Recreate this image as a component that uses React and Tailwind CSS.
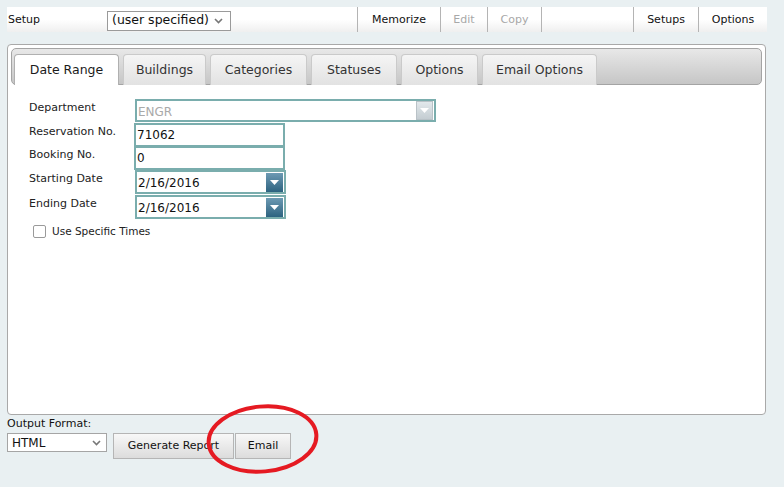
import React from "react";

const FONT = { fontFamily: '"DejaVu Sans", Verdana, sans-serif' };

function Chevron({ className = "" }) {
  return (
    <svg width="9" height="6" viewBox="0 0 9 6" className={className}>
      <polyline points="1,1 4.5,4.5 8,1" fill="none" stroke="#777" strokeWidth="1.6" />
    </svg>
  );
}

function Tri({ color = "#fff" }) {
  return (
    <svg width="9" height="5" viewBox="0 0 9 5">
      <polygon points="0,0 9,0 4.5,5" fill={color} />
    </svg>
  );
}

// toolbar button cell
function ToolBtn({ label, w, disabled }) {
  return (
    <div
      className={`h-full flex items-center justify-center pt-[2px] border-l border-[#b4b4b4] ${w} ${
        disabled ? "text-[#a8a8a8]" : "text-[#111]"
      }`}
    >
      {label}
    </div>
  );
}

const TABS = [
  { label: "Date Range", w: "w-[105px]", active: true },
  { label: "Buildings", w: "w-[83px]" },
  { label: "Categories", w: "w-[97px]" },
  { label: "Statuses", w: "w-[86px]" },
  { label: "Options", w: "w-[77px]" },
  { label: "Email Options", w: "w-[115px]" },
];

function TextBox({ value, className = "" }) {
  return (
    <div
      className={`h-[24px] w-[151px] border-2 border-[#7aadad] bg-white flex items-center pl-[1px] text-[12px] text-[#111] ${className}`}
    >
      {value}
    </div>
  );
}

function DateBox({ value }) {
  return (
    <div className="h-[24px] w-[151px] ml-[1px] border-2 border-[#7aadad] bg-white flex items-center justify-between pl-[1px] pr-[1px] text-[12px] text-[#111]">
      <span className="pt-[2px]">{value}</span>
      <div className="w-[17px] h-[19px] bg-gradient-to-b from-[#6d9ab3] to-[#2d6380] flex items-center justify-center">
        <Tri />
      </div>
    </div>
  );
}

function Label({ children }) {
  return <div className="w-[105px] pt-[1px] leading-[16px] text-[11px] text-[#222]">{children}</div>;
}

export default function App() {
  return (
    <div className="relative w-full min-h-[487px] bg-[#e9f0f2] pt-[7px] px-[7px]" style={FONT}>
      {/* toolbar */}
      <div className="w-[760px] h-[25px] flex items-center bg-gradient-to-b from-white via-white to-[#efefef] text-[11px]">
        <div className="w-[100px] pl-[1px] pt-[1px] text-[#111]">Setup</div>
        <div className="w-[124px] h-[20px] mt-[2px] border border-[#9a9a9a] bg-white flex items-center pl-[4px] pr-[7px] justify-between text-[12.5px] text-[#111]">
          <span>(user specified)</span>
          <Chevron />
        </div>
        <div className="w-[126px]" />
        <ToolBtn label="Memorize" w="w-[83px]" />
        <ToolBtn label="Edit" w="w-[47px]" disabled />
        <ToolBtn label="Copy" w="w-[54px]" disabled />
        <div className="h-full flex-1 border-l border-[#b4b4b4]" />
        <ToolBtn label="Setups" w="w-[65px]" />
        <ToolBtn label="Options" w="w-[69px]" />
      </div>

      {/* main panel */}
      <div className="mt-[12px] w-[759px] h-[371px] border border-[#a9a9a9] rounded-[4px] bg-white p-[3px]">
        <div className="h-[37px] flex items-end gap-[4px] pl-[2px] border border-[#a4a4a4] rounded-[5px] bg-gradient-to-b from-[#e8e8e8] to-[#c6c6c6]">
          {TABS.map((t) => (
            <div
              key={t.label}
              className={`${t.w} h-[31px] -mb-px flex items-center justify-center rounded-t-[4px] border border-b-0 text-[12.5px] ${
                t.active
                  ? "bg-white border-[#b0b0b0] text-[#1b1b1b]"
                  : "bg-gradient-to-b from-[#f5f5f5] to-[#e2e2e2] border-[#cacaca] text-[#333]"
              }`}
            >
              {t.label}
            </div>
          ))}
        </div>

        {/* form */}
        <div className="pl-[18px] pt-[14px] flex flex-col">
          <div className="flex items-start h-[24px]">
            <Label>Department</Label>
            <div className="h-[23px] w-[301px] ml-[1px] border-2 border-[#7aadad] bg-white flex items-center justify-between pl-[1px] pr-[1px] text-[12px] text-[#a9a9a9]">
              <span className="pt-[2px]">ENGR</span>
              <div className="w-[17px] h-[19px] border border-[#b9c2c7] bg-gradient-to-b from-[#e2e8eb] to-[#c4cdd2] flex items-center justify-center">
                <Tri />
              </div>
            </div>
          </div>
          <div className="flex items-start h-[23px]">
            <Label>Reservation No.</Label>
            <TextBox value="71062" />
          </div>
          <div className="flex items-start h-[24px]">
            <Label>Booking No.</Label>
            <TextBox value="0" />
          </div>
          <div className="flex items-start h-[25px]">
            <Label>Starting Date</Label>
            <DateBox value="2/16/2016" />
          </div>
          <div className="flex items-start h-[24px]">
            <Label>Ending Date</Label>
            <DateBox value="2/16/2016" />
          </div>
          <div className="flex items-center gap-[6px] mt-[5px] pl-[4px]">
            <div className="w-[13px] h-[13px] border border-[#9a9a9a] rounded-[2px] bg-white" />
            <span className="text-[10.5px] text-[#222]">Use Specific Times</span>
          </div>
        </div>
      </div>

      {/* footer */}
      <div className="mt-[2px] text-[11px] leading-[14px] text-[#111]">Output Format:</div>
      <div className="flex items-start mt-[2px]">
        <div className="w-[100px] h-[19px] border border-[#a5a5a5] bg-white flex items-center justify-between pl-[4px] pr-[5px] text-[12px] text-[#111]">
          <span>HTML</span>
          <Chevron />
        </div>
        <div className="ml-[6px] w-[121px] h-[26px] border border-[#b5b5b5] bg-gradient-to-b from-[#f8f8f8] to-[#dcdcdc] flex items-center justify-center text-[11px] text-[#111]">
          Generate Report
        </div>
        <div className="ml-[1px] w-[56px] h-[26px] border border-[#b5b5b5] bg-gradient-to-b from-[#f8f8f8] to-[#dcdcdc] flex items-center justify-center text-[11px] text-[#111]">
          Email
        </div>
      </div>

      {/* red annotation ellipse */}
      <svg className="absolute left-[200px] top-[398px] pointer-events-none" width="126" height="82" viewBox="200 398 126 82">
        <ellipse
          cx="262.5"
          cy="439"
          rx="54"
          ry="32.5"
          transform="rotate(-5 262.5 439)"
          fill="none"
          stroke="#e51a22"
          strokeWidth="4"
        />
      </svg>
    </div>
  );
}
